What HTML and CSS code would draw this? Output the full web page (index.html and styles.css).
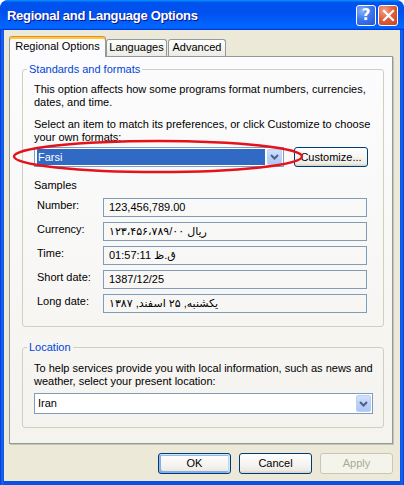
FILE: index.html
```html
<!DOCTYPE html>
<html>
<head>
<meta charset="utf-8">
<title>Regional and Language Options</title>
<link rel="stylesheet" href="styles.css">
</head>
<body>
<div class="window">
  <div class="titlebar">
    <span class="title">Regional and Language Options</span>
    <div class="tb-buttons">
      <span class="tb-btn help">?</span>
      <span class="tb-btn close"><svg width="13" height="13" viewBox="0 0 13 13"><path d="M2 2 L11 11 M11 2 L2 11" stroke="#fff" stroke-width="2.2" stroke-linecap="square" fill="none"/></svg></span>
    </div>
  </div>
  <div class="client">
    <div class="tabs">
      <div class="tab active">Regional Options</div>
      <div class="tab lang">Languages</div>
      <div class="tab adv">Advanced</div>
    </div>
    <div class="panel">
      <fieldset class="group std">
        <legend>Standards and formats</legend>
        <p>This option affects how some programs format numbers, currencies,<br>dates, and time.</p>
        <p class="p2">Select an item to match its preferences, or click Customize to choose<br>your own formats:</p>
        <div class="combo-row">
          <div class="combo farsi">
            <span class="sel">Farsi</span>
            <span class="dd"><svg width="9" height="6" viewBox="0 0 9 6"><path d="M1 1 L4.5 4.5 L8 1" stroke="#4D6185" stroke-width="2" fill="none"/></svg></span>
          </div>
          <div class="btn customize">Customize...</div>
        </div>
        <div class="samples-title">Samples</div>
        <div class="samples">
          <span class="lbl">Number:</span><div class="box">123,456,789.00</div>
          <span class="lbl">Currency:</span><div class="box"><span class="fa" dir="rtl">ریال ۱۲۳،۴۵۶،۷۸۹/۰۰</span></div>
          <span class="lbl">Time:</span><div class="box"><span class="fa" dir="rtl">ق.ظ 01:57:11</span></div>
          <span class="lbl">Short date:</span><div class="box">1387/12/25</div>
          <span class="lbl">Long date:</span><div class="box"><span class="fa" dir="rtl">یکشنبه, ۲۵ اسفند, ۱۳۸۷</span></div>
        </div>
      </fieldset>
      <fieldset class="group loc">
        <legend>Location</legend>
        <p>To help services provide you with local information, such as news and<br>weather, select your present location:</p>
        <div class="combo iran">
          <span class="val">Iran</span>
          <span class="dd"><svg width="9" height="6" viewBox="0 0 9 6"><path d="M1 1 L4.5 4.5 L8 1" stroke="#4D6185" stroke-width="2" fill="none"/></svg></span>
        </div>
      </fieldset>
    </div>
    <div class="buttons">
      <div class="btn default">OK</div>
      <div class="btn">Cancel</div>
      <div class="btn disabled">Apply</div>
    </div>
  </div>
  <svg class="annot" width="294" height="36" viewBox="0 0 294 36"><ellipse cx="146" cy="17.5" rx="144" ry="15.5" fill="none" stroke="#E5121C" stroke-width="2.4"/></svg>
</div>
</body>
</html>
```
FILE: styles.css
```css
* { box-sizing: border-box; }
html, body { margin: 0; padding: 0; }
body {
  width: 404px;
  height: 485px;
  overflow: hidden;
  background: #ffffff;
  font-family: "Liberation Sans", Arial, sans-serif;
  font-size: 11px;
  line-height: 13px;
  color: #000;
}
.window {
  position: relative;
  width: 404px;
  height: 485px;
  background: linear-gradient(90deg, #0831D9 0, #166AEE 2px, #0A4FE3 4px, #0A4FE3 400px, #166AEE 402px, #0831D9 404px);
  border-radius: 8px 8px 0 0;
  display: flex;
  flex-direction: column;
  overflow: hidden;
}
.titlebar {
  flex: none;
  height: 30px;
  display: flex;
  align-items: center;
  justify-content: space-between;
  padding: 0 6px 0 7px;
  background: linear-gradient(180deg, #0997ff, #0053ee 8%, #0050ee 40%, #0066ff 88%, #0066ff 93%, #005bff 95%, #003dd7 96%, #003dd7);
  border-radius: 8px 8px 0 0;
}
.title {
  font-family: "Liberation Sans", Arial, sans-serif;
  font-weight: bold;
  font-size: 13px;
  letter-spacing: -0.3px;
  line-height: 16px;
  padding-top: 2px;
  color: #fff;
  text-shadow: 1px 1px 0 #0F1089;
}
.tb-buttons { display: flex; gap: 2px; }
.tb-btn {
  width: 20px;
  height: 21px;
  border: 1px solid #fff;
  border-radius: 3px;
  display: flex;
  align-items: center;
  justify-content: center;
  color: #fff;
}
.help {
  background: radial-gradient(circle at 30% 25%, #8DB4FB 0, #3D78EE 45%, #2255DA 100%);
  font-family: "DejaVu Sans", sans-serif;
  font-weight: bold;
  font-size: 15px;
  line-height: 15px;
}
.close {
  background: radial-gradient(circle at 30% 25%, #F1A48B 0, #E2603D 45%, #C8401C 100%);
}
.client {
  flex: 1;
  margin: 0 4px 4px 4px;
  background: #ECE9D8;
  padding: 6px 7px 0 5px;
}
.tabs {
  display: flex;
  height: 21px;
  position: relative;
  z-index: 1;
  margin-bottom: -1px;
}
.tab {
  height: 17px;
  margin-top: 3px;
  border: 1px solid #919B9C;
  border-bottom: none;
  border-radius: 3px 3px 0 0;
  background: linear-gradient(180deg, #FFFFFF, #F3F3EF 60%, #ECEBE5);
  display: flex;
  justify-content: center;
  padding-top: 1px;
  white-space: nowrap;
}
.tab.active {
  width: 97px;
  height: 21px;
  margin-top: 0;
  background: #FCFCFE;
  border-top: 1px solid #E68B2C;
  box-shadow: inset 0 2px 0 #FFC83C;
  padding-top: 3px;
}
.tab.lang { width: 61px; }
.tab.adv { width: 58px; margin-left: 1px; }
.panel {
  width: 384px;
  height: 388px;
  border: 1px solid #919B9C;
  background: linear-gradient(180deg, #FCFCFE, #F4F3EE);
  box-shadow: 1px 1px 0 #C7C4B4;
  padding: 0 8px 0 12px;
}
.group {
  margin: 0;
  min-inline-size: 0;
  border: 1px solid #D0D0BF;
  border-radius: 3px;
  padding: 0 11px 13px 11px;
}
.group legend {
  color: #0046D5;
  padding: 0 2px;
  margin-left: -7px;
  line-height: 13px;
}
.std { margin-top: 6px; padding-top: 7px; }
.loc { margin-top: 14px; padding-top: 8px; }
p { margin: 0; white-space: nowrap; }
.p2 { margin-top: 9px; }
.combo-row {
  display: flex;
  gap: 10px;
  margin-top: 3px;
  height: 20px;
}
.combo {
  border: 1px solid #7F9DB9;
  background: #fff;
  display: flex;
  align-items: stretch;
}
.farsi { width: 250px; height: 20px; padding: 1px; }
.farsi .sel {
  flex: 1;
  margin-left: 1px;
  margin-right: 2px;
  background: #316AC5;
  color: #fff;
  padding-left: 1px;
  line-height: 16px;
}
.dd {
  width: 15px;
  flex: none;
  border: 1px solid #BAD0F7;
  border-radius: 2px;
  background: linear-gradient(180deg, #D2E0FC, #B9CEF9 60%, #AFC6F6);
  display: flex;
  align-items: center;
  justify-content: center;
}
.iran {
  width: 339px;
  height: 21px;
  margin-top: 5px;
  padding: 1px;
}
.iran .val { flex: 1; padding-left: 2px; line-height: 17px; }
.btn {
  width: 74px;
  height: 20px;
  border: 1px solid #003C74;
  border-radius: 3px;
  background: linear-gradient(180deg, #FFFFFF, #F4F3EE 60%, #ECEBE6 86%, #D6D0C5);
  display: flex;
  align-items: center;
  justify-content: center;
  white-space: nowrap;
}
.samples-title { margin-top: 12px; }
.samples {
  margin-top: 6px;
  display: grid;
  grid-template-columns: 69px 264px;
  grid-auto-rows: 19px;
  row-gap: 5px;
}
.lbl { padding-left: 3px; padding-top: 1px; white-space: nowrap; }
.box {
  border: 1px solid #7F9DB9;
  padding: 2px 5px 0 5px;
  white-space: nowrap;
}
.fa {
  font-family: "Liberation Sans", "DejaVu Sans", sans-serif;
  font-size: 11px;
  unicode-bidi: isolate;
}
.buttons {
  display: flex;
  justify-content: flex-end;
  gap: 8px;
  margin-top: 9px;
}
.buttons .btn { width: 73px; height: 21px; }
.btn.default {
  box-shadow: inset -1px 1px #CEE7FF, inset 1px 2px #98B8EA, inset -2px 0 #BCD4F6, inset 1px -1px #89ADE4, inset 2px -2px #89ADE4;
}
.btn.disabled {
  border-color: #C9C7BA;
  color: #ACA899;
  background: #F5F4EA;
}
.annot {
  position: absolute;
  left: 12px;
  top: 139px;
  pointer-events: none;
}
```
